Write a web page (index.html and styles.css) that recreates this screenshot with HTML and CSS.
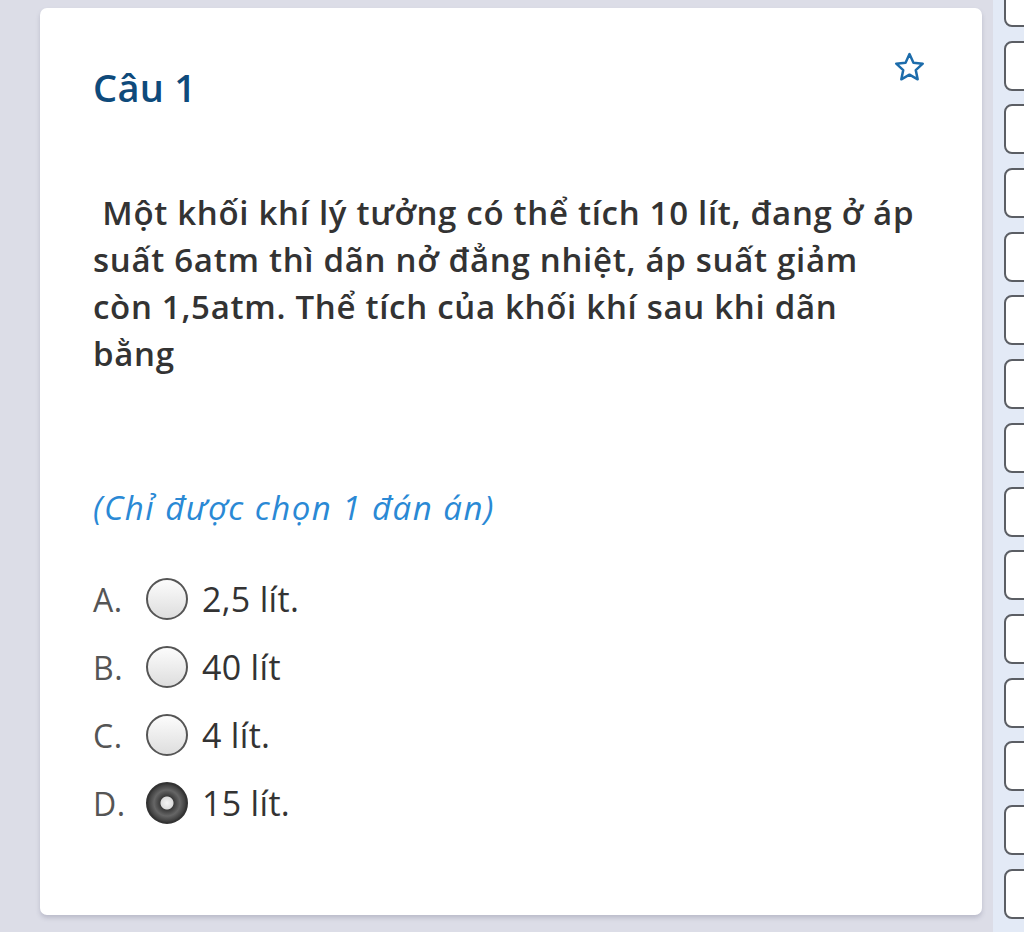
FILE: index.html
```html
<html>
<head>
    <meta charset="utf-8">
    <link rel="stylesheet" href="styles.css">
</head>
<body>
<div class="page">
    <div class="card">
        <div class="card-head">
            <h2 class="q-title">Câu 1</h2>
            <svg class="star" viewBox="0 0 24 24" width="35" height="35">
                <path d="M12 2.8l2.7 5.9 6.4.7-4.8 4.4 1.3 6.3L12 16.9l-5.6 3.2 1.3-6.3-4.8-4.4 6.4-.7z" fill="none" stroke="#1c6cab" stroke-width="1.7" stroke-linejoin="round"/>
            </svg>
        </div>

        <p class="q-text">&nbsp;Một khối khí lý tưởng có thể tích 10 lít, đang ở áp suất 6atm thì dãn nở đẳng nhiệt, áp suất giảm còn 1,5atm. Thể tích của khối khí sau khi dãn bằng</p>

        <p class="q-hint">(Chỉ được chọn 1 đán án)</p>

        <div class="answers">
            <div class="answer">
                <span class="letter">A.</span>
                <span class="radio"></span>
                <span class="answer-text">2,5 lít.</span>
            </div>
            <div class="answer">
                <span class="letter">B.</span>
                <span class="radio"></span>
                <span class="answer-text">40 lít</span>
            </div>
            <div class="answer">
                <span class="letter">C.</span>
                <span class="radio"></span>
                <span class="answer-text">4 lít.</span>
            </div>
            <div class="answer">
                <span class="letter">D.</span>
                <span class="radio checked"></span>
                <span class="answer-text">15 lít.</span>
            </div>
        </div>
    </div>

    <div class="side">
        <div class="box"></div>
        <div class="box"></div>
        <div class="box"></div>
        <div class="box"></div>
        <div class="box"></div>
        <div class="box"></div>
        <div class="box"></div>
        <div class="box"></div>
        <div class="box"></div>
        <div class="box"></div>
        <div class="box"></div>
        <div class="box"></div>
        <div class="box"></div>
        <div class="box"></div>
        <div class="box"></div>
    </div>
</div>
</body>
</html>
```

FILE: styles.css
```css
body {
    margin: 0;
    background: #dcdde7;
    font-family: "Open Sans", "Noto Sans", sans-serif;
}

.page {
    display: flex;
    height: 932px;
    overflow: hidden;
}

.card {
    box-sizing: border-box;
    width: 942px;
    height: 907px;
    margin: 8px 0 0 40px;
    padding: 0 53px;
    background: #fff;
    border-radius: 7px;
    box-shadow: 0 3px 4px rgba(90, 92, 120, 0.25);
    flex-shrink: 0;
}

.card-head {
    display: flex;
    justify-content: space-between;
    align-items: flex-start;
    padding-top: 55px;
}

.q-title {
    margin: 0;
    font-size: 38px;
    font-weight: 600;
    line-height: 48px;
    color: #0e4a7b;
    letter-spacing: 0.3px;
}

.star {
    margin: -13px 2px 0 0;
}

.q-text {
    width: 826px;
    margin: 78px 0 0 0;
    font-size: 33px;
    font-weight: 600;
    line-height: 47px;
    letter-spacing: 0.7px;
    color: #333;
}

.q-hint {
    margin: 111px 0 0 0;
    font-size: 33px;
    font-style: italic;
    line-height: 40px;
    letter-spacing: 1.5px;
    color: #2a89d5;
}

.answers {
    margin-top: 37px;
}

.answer {
    display: flex;
    align-items: center;
    height: 68px;
}

.letter {
    width: 53px;
    font-size: 32px;
    letter-spacing: 0.5px;
    color: #555;
}

.radio {
    box-sizing: border-box;
    width: 42px;
    height: 42px;
    border: 2px solid #555;
    border-radius: 50%;
    background: linear-gradient(#fcfcfc, #dedede);
    margin-right: 14px;
}

.radio.checked {
    background: radial-gradient(circle, #f4f4f4 0, #dcdcdc 6px, #3a3a3a 7px, #666 13px, #333 20px);
    border-color: #333;
}

.answer-text {
    font-size: 34px;
    letter-spacing: 0.3px;
    color: #333;
}

.side {
    box-sizing: border-box;
    margin-left: 11px;
    padding-left: 11px;
    width: 31px;
    background: #e3eaf6;
    flex-shrink: 0;
}

.box {
    box-sizing: border-box;
    width: 40px;
    height: 50px;
    margin-top: 13.7px;
    border: 2px solid #5b5e64;
    border-radius: 8px;
    background: #fff;
}

.box:first-child {
    margin-top: -23px;
}
```
